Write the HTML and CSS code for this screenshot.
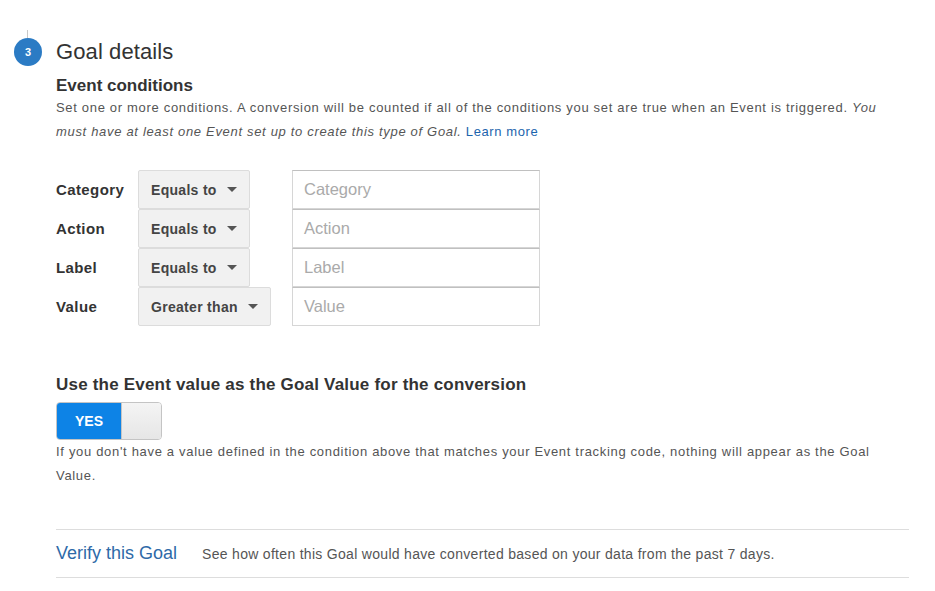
FILE: index.html
```
<!DOCTYPE html>
<html lang="en">
<head>
<meta charset="utf-8">
<title>Goal details</title>
<link rel="stylesheet" href="styles.css">
</head>
<body>
<div class="page">
  <div class="step-header">
    <span class="badge">3</span>
    <h1 class="step-title">Goal details</h1>
  </div>
  <div class="content">
    <h2 class="section-title">Event conditions</h2>
    <p class="desc">Set one or more conditions. A conversion will be counted if all of the conditions you set are true when an Event is triggered. <em>You</em> <em>must have at least one Event set up to create this type of Goal.</em> <a class="link" href="#">Learn more</a></p>

    <div class="conditions">
      <div class="cond-label">Category</div>
      <div class="cond-op"><span class="select">Equals to <span class="caret"></span></span></div>
      <div class="cond-input"><span class="input">Category</span></div>

      <div class="cond-label">Action</div>
      <div class="cond-op"><span class="select">Equals to <span class="caret"></span></span></div>
      <div class="cond-input"><span class="input">Action</span></div>

      <div class="cond-label">Label</div>
      <div class="cond-op"><span class="select">Equals to <span class="caret"></span></span></div>
      <div class="cond-input"><span class="input">Label</span></div>

      <div class="cond-label">Value</div>
      <div class="cond-op"><span class="select">Greater than <span class="caret"></span></span></div>
      <div class="cond-input"><span class="input">Value</span></div>
    </div>

    <h2 class="value-title">Use the Event value as the Goal Value for the conversion</h2>
    <div class="toggle">
      <span class="toggle-on">YES</span>
      <span class="toggle-knob"></span>
    </div>
    <p class="help">If you don't have a value defined in the condition above that matches your Event tracking code, nothing will appear as the Goal Value.</p>

    <div class="verify">
      <a class="verify-link" href="#">Verify this Goal</a>
      <span class="verify-text">See how often this Goal would have converted based on your data from the past 7 days.</span>
    </div>
  </div>
</div>
</body>
</html>
```
FILE: styles.css
```
* { box-sizing: border-box; }
body {
  margin: 0;
  background: #fff;
  font-family: "Liberation Sans", Arial, sans-serif;
  color: #333;
}
.page {
  padding-top: 38px;
}
.step-header {
  display: flex;
  align-items: center;
  height: 28px;
  padding-left: 14px;
  gap: 14px;
}
.badge {
  position: relative;
  display: flex;
  align-items: center;
  justify-content: center;
  width: 28px;
  height: 28px;
  border-radius: 50%;
  background: #2b7bc4;
  color: #fff;
  font-size: 11px;
  font-weight: bold;
}
.badge::before {
  content: "";
  position: absolute;
  left: 13px;
  top: -8px;
  width: 1px;
  height: 8px;
  background: #c8c8c8;
}
.step-title {
  margin: 0;
  font-size: 22px;
  font-weight: normal;
  line-height: 28px;
  color: #333;
  letter-spacing: 0.1px;
}
.content {
  margin-left: 56px;
  width: 853px;
}
.section-title {
  margin: 10px 0 0;
  font-size: 17px;
  line-height: 20px;
  font-weight: bold;
  color: #333;
}
.desc {
  margin: 0;
  font-size: 13px;
  line-height: 24px;
  color: #555;
  letter-spacing: 0.68px;
  width: 840px;
}
.link { color: #1c64ad; text-decoration: none; letter-spacing: 0.6px; }
.conditions {
  margin-top: 26px;
  display: grid;
  grid-template-columns: 82px 154px 248px;
  grid-auto-rows: 39px;
  align-items: center;
}
.cond-label {
  font-size: 15px;
  font-weight: bold;
  color: #333;
  letter-spacing: 0.4px;
}
.cond-op, .cond-input { height: 39px; }
.select {
  display: inline-flex;
  align-items: center;
  height: 39px;
  padding: 0 12px 0 12px;
  background: #f1f1f1;
  border: 1px solid #dcdcdc;
  border-radius: 2px;
  font-size: 14px;
  font-weight: bold;
  color: #444;
  letter-spacing: 0.3px;
}
.caret {
  display: inline-block;
  margin-left: 10px;
  width: 0;
  height: 0;
  border-left: 5px solid transparent;
  border-right: 5px solid transparent;
  border-top: 5px solid #555;
}
.input {
  display: flex;
  align-items: center;
  height: 39px;
  padding-left: 11px;
  border: 1px solid #d6d6d6;
  border-top-color: #c0c0c0;
  font-size: 16.5px;
  color: #aaa;
  background: #fff;
}
.value-title {
  margin: 49px 0 0;
  font-size: 17px;
  line-height: 20px;
  font-weight: bold;
  color: #333;
  letter-spacing: 0.2px;
}
.toggle {
  margin-top: 7px;
  display: flex;
  width: 106px;
  height: 38px;
  border-radius: 4px;
  overflow: hidden;
  border: 1px solid #c4c4c4;
}
.toggle-on {
  display: flex;
  align-items: center;
  justify-content: center;
  width: 64px;
  background: #0d83e6;
  color: #fff;
  font-size: 14px;
  font-weight: bold;
}
.toggle-knob {
  flex: 1;
  background: linear-gradient(#f4f4f4, #e6e6e6);
  border-left: 1px solid #c4c4c4;
}
.help {
  margin: 0;
  font-size: 13px;
  line-height: 24px;
  color: #555;
  letter-spacing: 0.68px;
}
.verify {
  margin-top: 41px;
  display: flex;
  align-items: center;
  gap: 25px;
  height: 49px;
  border-top: 1px solid #ddd;
  border-bottom: 1px solid #ddd;
}
.verify-link {
  font-size: 18px;
  color: #2e6aa8;
  text-decoration: none;
}
.verify-text {
  font-size: 14px;
  color: #555;
  letter-spacing: 0.3px;
}
```
